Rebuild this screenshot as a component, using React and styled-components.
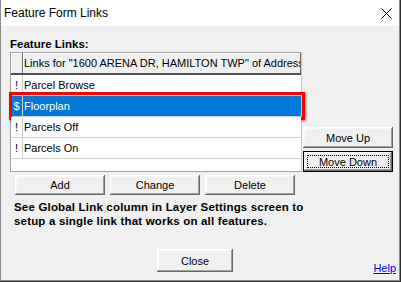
import styled, { createGlobalStyle } from "styled-components";

const GlobalStyle = createGlobalStyle`
  html, body {
    margin: 0;
    padding: 0;
    background: #2e2e2e;
  }
  body {
    font-family: "Liberation Sans", Arial, sans-serif;
  }
`;

const Window = styled.div`
  width: 400px;
  height: 281px;
  box-sizing: border-box;
  background: #f0f0f0;
  border: 1px solid #8a8a8a;
  border-top: none;
  display: flex;
  flex-direction: column;
`;

const TitleBar = styled.div`
  height: 26px;
  flex: none;
  background: #fff;
  display: flex;
  align-items: center;
  justify-content: space-between;
  padding: 0 7px 0 3px;
  font-size: 12px;
  line-height: 14px;
  color: #000;
`;

const Body = styled.div`
  flex: 1;
  display: flex;
  flex-direction: column;
  padding: 12px 0 0 9px;
  font-size: 11px;
  color: #000;
`;

const Label = styled.div`
  font-weight: bold;
  font-size: 11.5px;
  line-height: 13px;
  margin-bottom: 1px;
`;

const ListArea = styled.div`
  display: flex;
  align-items: flex-end;
  gap: 1px;
`;

const Grid = styled.div`
  width: 292px;
  height: 120px;
  box-sizing: border-box;
  background: #fff;
  border: 1px solid #a0a0a0;
  border-right-color: #c8c8c8;
  display: flex;
  flex-direction: column;
`;

const HeaderRow = styled.div`
  display: flex;
  height: 22px;
  flex: none;
`;

const HeaderCell = styled.div`
  box-sizing: border-box;
  background: #f0f0f0;
  border-right: 1px solid #696969;
  border-bottom: 2px solid #505050;
  box-shadow: inset 1px 1px #fff;
  display: flex;
  align-items: center;
  padding-left: 1px;
  white-space: nowrap;
  overflow: hidden;
  width: ${(p) => (p.$w ? `${p.$w}px` : "auto")};
  flex: ${(p) => (p.$w ? "none" : "1")};
`;

const Row = styled.div`
  position: relative;
  display: flex;
  height: 21px;
  flex: none;
  box-sizing: border-box;
  border-bottom: 1px solid #cfcfcf;
  background: ${(p) => (p.$selected ? "#0078d7" : "#fff")};
  color: ${(p) => (p.$selected ? "#fff" : "#000")};

  ${(p) =>
    p.$selected &&
    `
    &::after {
      content: "";
      position: absolute;
      top: -4px;
      bottom: -4px;
      left: -2px;
      right: -4px;
      border: 3px solid #ff0000;
      box-shadow: 1px 1px 2px rgba(0, 0, 0, 0.45);
      pointer-events: none;
    }
  `}
`;

const IndCell = styled.div`
  width: 12px;
  flex: none;
  box-sizing: border-box;
  border-right: 1px solid #cfcfcf;
  display: flex;
  align-items: center;
  justify-content: center;
`;

const TextCell = styled.div`
  flex: 1;
  display: flex;
  align-items: center;
  padding-left: 1px;
  white-space: nowrap;
`;

const SideButtons = styled.div`
  display: flex;
  flex-direction: column;
  gap: 3px;
`;

const Button = styled.button`
  position: relative;
  width: ${(p) => p.$w || 90}px;
  height: ${(p) => p.$h || 20}px;
  box-sizing: border-box;
  padding: 0;
  font-family: "Liberation Sans", Arial, sans-serif;
  font-size: 11px;
  color: #000;
  background: #f0f0f0;
  border: ${(p) => (p.$default ? "1px solid #000" : "none")};
  box-shadow: inset -1px -1px #696969, inset 1px 1px #fff,
    inset -2px -2px #a0a0a0, inset 2px 2px #f8f8f8;

  ${(p) =>
    p.$default &&
    `
    &::after {
      content: "";
      position: absolute;
      inset: 3px;
      border: 1px dotted #000;
    }
  `}
`;

const ActionRow = styled.div`
  display: flex;
  gap: 5px;
  margin-top: 3px;
  padding-left: 5px;
`;

const Note = styled.p`
  margin: 5px 0 0;
  padding-left: 4px;
  font-weight: bold;
  font-size: 11.5px;
  line-height: 14px;
  letter-spacing: 0.18px;
`;

const Footer = styled.div`
  display: flex;
  align-items: flex-end;
  margin-top: 21px;
`;

const CloseButton = styled(Button)`
  margin-left: 147px;
`;

const HelpLink = styled.a`
  margin-left: auto;
  margin-right: 3px;
  margin-bottom: -3px;
  font-size: 11px;
  line-height: 13px;
  color: #0000ff;
  text-decoration: underline;
  cursor: pointer;
`;

const rows = [
  { mark: "!", name: "Parcel Browse" },
  { mark: "$", name: "Floorplan", selected: true },
  { mark: "!", name: "Parcels Off" },
  { mark: "!", name: "Parcels On" },
];

export default function App() {
  return (
    <>
      <GlobalStyle />
      <Window>
        <TitleBar>
          <span>Feature Form Links</span>
          <svg width="11" height="11" viewBox="0 0 11 11">
            <path d="M0.5 0.5 L10.5 10.5 M10.5 0.5 L0.5 10.5" stroke="#000" strokeWidth="1" />
          </svg>
        </TitleBar>
        <Body>
          <Label>Feature Links:</Label>
          <ListArea>
            <Grid>
              <HeaderRow>
                <HeaderCell $w={12} />
                <HeaderCell>Links for "1600 ARENA DR, HAMILTON TWP" of Address</HeaderCell>
              </HeaderRow>
              {rows.map((r) => (
                <Row key={r.name} $selected={r.selected}>
                  <IndCell>{r.mark}</IndCell>
                  <TextCell>{r.name}</TextCell>
                </Row>
              ))}
            </Grid>
            <SideButtons>
              <Button $h={21}>Move Up</Button>
              <Button $h={21} $default>
                Move Down
              </Button>
            </SideButtons>
          </ListArea>
          <ActionRow>
            <Button>Add</Button>
            <Button>Change</Button>
            <Button>Delete</Button>
          </ActionRow>
          <Note>
            See Global Link column in Layer Settings screen to
            <br />
            setup a single link that works on all features.
          </Note>
          <Footer>
            <CloseButton $w={76} $h={23}>
              Close
            </CloseButton>
            <HelpLink>Help</HelpLink>
          </Footer>
        </Body>
      </Window>
    </>
  );
}
